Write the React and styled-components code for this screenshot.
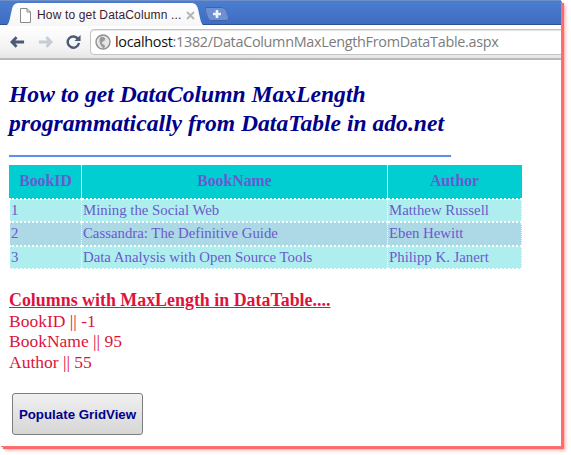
import React from "react";
import styled, { createGlobalStyle } from "styled-components";

const Global = createGlobalStyle`
  html, body { margin: 0; padding: 0; background: #fff; }
  html { overflow: hidden; }
  body { min-height: 455px; font-family: "Liberation Serif", serif; }
`;
const Frame = styled.div`
  width: 561px;
  height: 446px;
  background: #fff;
  overflow: hidden;
  box-shadow: 1px 1px 0 #ff7070, 3px 3px 1px #ff6a6a, 5px 5px 3px #ffc8c8;
`;
const TabBar = styled.div`
  height: 25px;
  box-sizing: border-box;
  padding: 2px 0 0 3px;
  display: flex;
  align-items: flex-start;
  background: linear-gradient(#4a7dd0, #3e6dc2);
  border-bottom: 1px solid #2c4f96;
  border-top: 1px solid #6f8fc8;
`;
const Tab = styled.div`
  flex: none;
  width: 202px;
  height: 23px;
  box-sizing: border-box;
  padding: 1px 14px 0 16px;
  display: flex;
  align-items: center;
  gap: 5px;
  background: linear-gradient(#ffffff, #f6f6f6);
  clip-path: path("M0 23 C5 23 6 20 7 15 L9 6 C10 2 12 0 16 0 L188 0 C192 0 194 2 195 6 L197 15 C198 20 200 23 202 23 Z");
`;
const TabTitle = styled.span`
  flex: 1;
  font: 12px/14px "Liberation Sans", sans-serif;
  letter-spacing: 0.15px;
  color: #3b2230;
  white-space: nowrap;
`;
const TabGlyph = styled.svg`
  flex: none;
`;
const NewTab = styled.div`
  flex: none;
  margin: 4px 0 0 1px;
  width: 22px;
  height: 14px;
  display: flex;
  align-items: center;
  justify-content: center;
  background: #6d90d2;
  border-radius: 3px 5px 4px 4px;
  transform: skewX(18deg);
  box-shadow: inset 0 0 0 1px #3f64a8;
`;
const NewTabIcon = styled.svg`
  transform: skewX(-18deg);
`;
const Toolbar = styled.div`
  height: 35px;
  box-sizing: border-box;
  padding: 4px 0 4px 10px;
  display: flex;
  align-items: center;
  background: linear-gradient(#ffffff, #f3f3f3 70%, #e6e6e6);
  border-bottom: 2px solid #b9b9b9;
`;
const NavIcon = styled.svg`
  flex: none;
  margin-right: ${(p) => p.$gap}px;
`;
const AddressBar = styled.div`
  flex: 1;
  height: 26px;
  box-sizing: border-box;
  margin-right: -6px;
  padding-left: 4px;
  display: flex;
  align-items: center;
  gap: 4px;
  background: #fff;
  border: 1px solid #c4c4c4;
  border-radius: 4px;
  box-shadow: inset 0 1px 1px #e4e4e4;
`;
const Url = styled.span`
  font: 14.4px/18px "Open Sans", "Liberation Sans", sans-serif;
  letter-spacing: -0.3px;
  color: #7c7c7c;
  white-space: nowrap;
`;
const Host = styled.span`
  color: #111;
`;
const Page = styled.main`
  padding: 20px 0 0 9px;
`;
const Heading = styled.h1`
  margin: 0;
  width: 460px;
  font: italic bold 23.6px/29px "Liberation Serif", serif;
  color: #00008b;
`;
const Rule = styled.hr`
  width: 442px;
  height: 2px;
  margin: 17px 0 8px;
  border: 0;
  background: #5f8fe8;
  box-shadow: 0 0 1px #b4c8f4;
`;
const Grid = styled.table`
  width: 512px;
  border-collapse: collapse;
  table-layout: fixed;
  font: 14.8px/17px "Liberation Serif", serif;
  color: #6a5acd;
`;
const HeadCell = styled.th`
  height: 33px;
  padding: 0 0 2px;
  box-sizing: border-box;
  background: #00ced1;
  border: 1px solid #00ced1;
  border-right-color: #e8fbfb;
  font-size: 15.8px;
  font-weight: bold;
  text-align: center;
  &:last-child { border-right-color: #00ced1; }
`;
const Row = styled.tr`
  background: ${(p) => p.$bg};
`;
const Cell = styled.td`
  height: 23.5px;
  padding: 0 0 0 1px;
  box-sizing: border-box;
  border-style: dotted;
  border-color: #fff;
  border-width: 2px 1px;
  white-space: nowrap;
`;
const Summary = styled.section`
  margin-top: 20px;
  font: 17.5px/20.5px "Liberation Serif", serif;
  color: #dc143c;
`;
const SummaryTitle = styled.div`
  font-size: 17.9px;
  font-weight: bold;
  text-decoration: underline;
`;
const ActionRow = styled.div`
  margin: 21px 0 0 3px;
`;
const Action = styled.button`
  width: 131px;
  height: 42px;
  padding: 0;
  background: linear-gradient(#f0f0f0, #d6d6d6);
  border: 1px solid #7d7d7d;
  border-radius: 3px;
  font: bold 13.3px "Liberation Sans", sans-serif;
  color: #00008b;
`;

const rows = [
  ["1", "Mining the Social Web", "Matthew Russell", "#afeeee"],
  ["2", "Cassandra: The Definitive Guide", "Eben Hewitt", "#add8e6"],
  ["3", "Data Analysis with Open Source Tools", "Philipp K. Janert", "#afeeee"],
];

export default function App() {
  return (
    <Frame>
      <Global />
      <TabBar>
        <Tab>
          <TabGlyph width="13" height="15" viewBox="0 0 13 15">
            <path d="M1.5 .5H8L11.5 4V14.5H1.5Z M8 .5V4H11.5" fill="#fff" stroke="#8a8a8a" />
          </TabGlyph>
          <TabTitle>How to get DataColumn ...</TabTitle>
          <TabGlyph width="9" height="9" viewBox="0 0 9 9">
            <path d="M1 1L8 8M8 1L1 8" stroke="#b5b5b5" strokeWidth="1.8" />
          </TabGlyph>
        </Tab>
        <NewTab>
          <NewTabIcon width="10" height="10" viewBox="0 0 10 10">
            <path d="M5 1V9M1 5H9" stroke="#eef3fb" strokeWidth="2.6" />
          </NewTabIcon>
        </NewTab>
      </TabBar>
      <Toolbar>
        <NavIcon $gap={13} width="15" height="14" viewBox="0 0 16 14">
          <path d="M7 2L2 7L7 12M2 7H15" fill="none" stroke="#4b5a78" strokeWidth="3" />
        </NavIcon>
        <NavIcon $gap={13} width="15" height="14" viewBox="0 0 16 14">
          <path d="M9 2L14 7L9 12M14 7H1" fill="none" stroke="#c6ccd6" strokeWidth="3" />
        </NavIcon>
        <NavIcon $gap={9} width="15" height="15" viewBox="0 0 16 16">
          <path d="M13 5.5A6 6 0 1 0 13.8 9.5" fill="none" stroke="#4b5a78" strokeWidth="2.6" />
          <path d="M15.5 1V7.5H9Z" fill="#4b5a78" />
        </NavIcon>
        <AddressBar>
          <svg width="16" height="16" viewBox="0 0 16 16">
            <circle cx="8" cy="8" r="7" fill="#e6e6e6" stroke="#8f8f8f" strokeWidth="1.4" />
            <path d="M6 2.5C9 3 11 4 10 6S7 7 7 9s3 1 3 3-1 2-2 2C5 11 3 6 6 2.5Z" fill="#9a9a9a" />
          </svg>
          <Url>
            <Host>localhost</Host>:1382/DataColumnMaxLengthFromDataTable.aspx
          </Url>
        </AddressBar>
      </Toolbar>
      <Page>
        <Heading>How to get DataColumn MaxLength programmatically from DataTable in ado.net</Heading>
        <Rule />
        <Grid>
          <colgroup>
            <col width="72" />
            <col width="306" />
            <col width="134" />
          </colgroup>
          <thead>
            <tr>
              <HeadCell>BookID</HeadCell>
              <HeadCell>BookName</HeadCell>
              <HeadCell>Author</HeadCell>
            </tr>
          </thead>
          <tbody>
            {rows.map(([id, name, author, bg]) => (
              <Row key={id} $bg={bg}>
                <Cell>{id}</Cell>
                <Cell>{name}</Cell>
                <Cell>{author}</Cell>
              </Row>
            ))}
          </tbody>
        </Grid>
        <Summary>
          <SummaryTitle>Columns with MaxLength in DataTable....</SummaryTitle>
          <div>BookID || -1</div>
          <div>BookName || 95</div>
          <div>Author || 55</div>
        </Summary>
        <ActionRow>
          <Action>Populate GridView</Action>
        </ActionRow>
      </Page>
    </Frame>
  );
}
